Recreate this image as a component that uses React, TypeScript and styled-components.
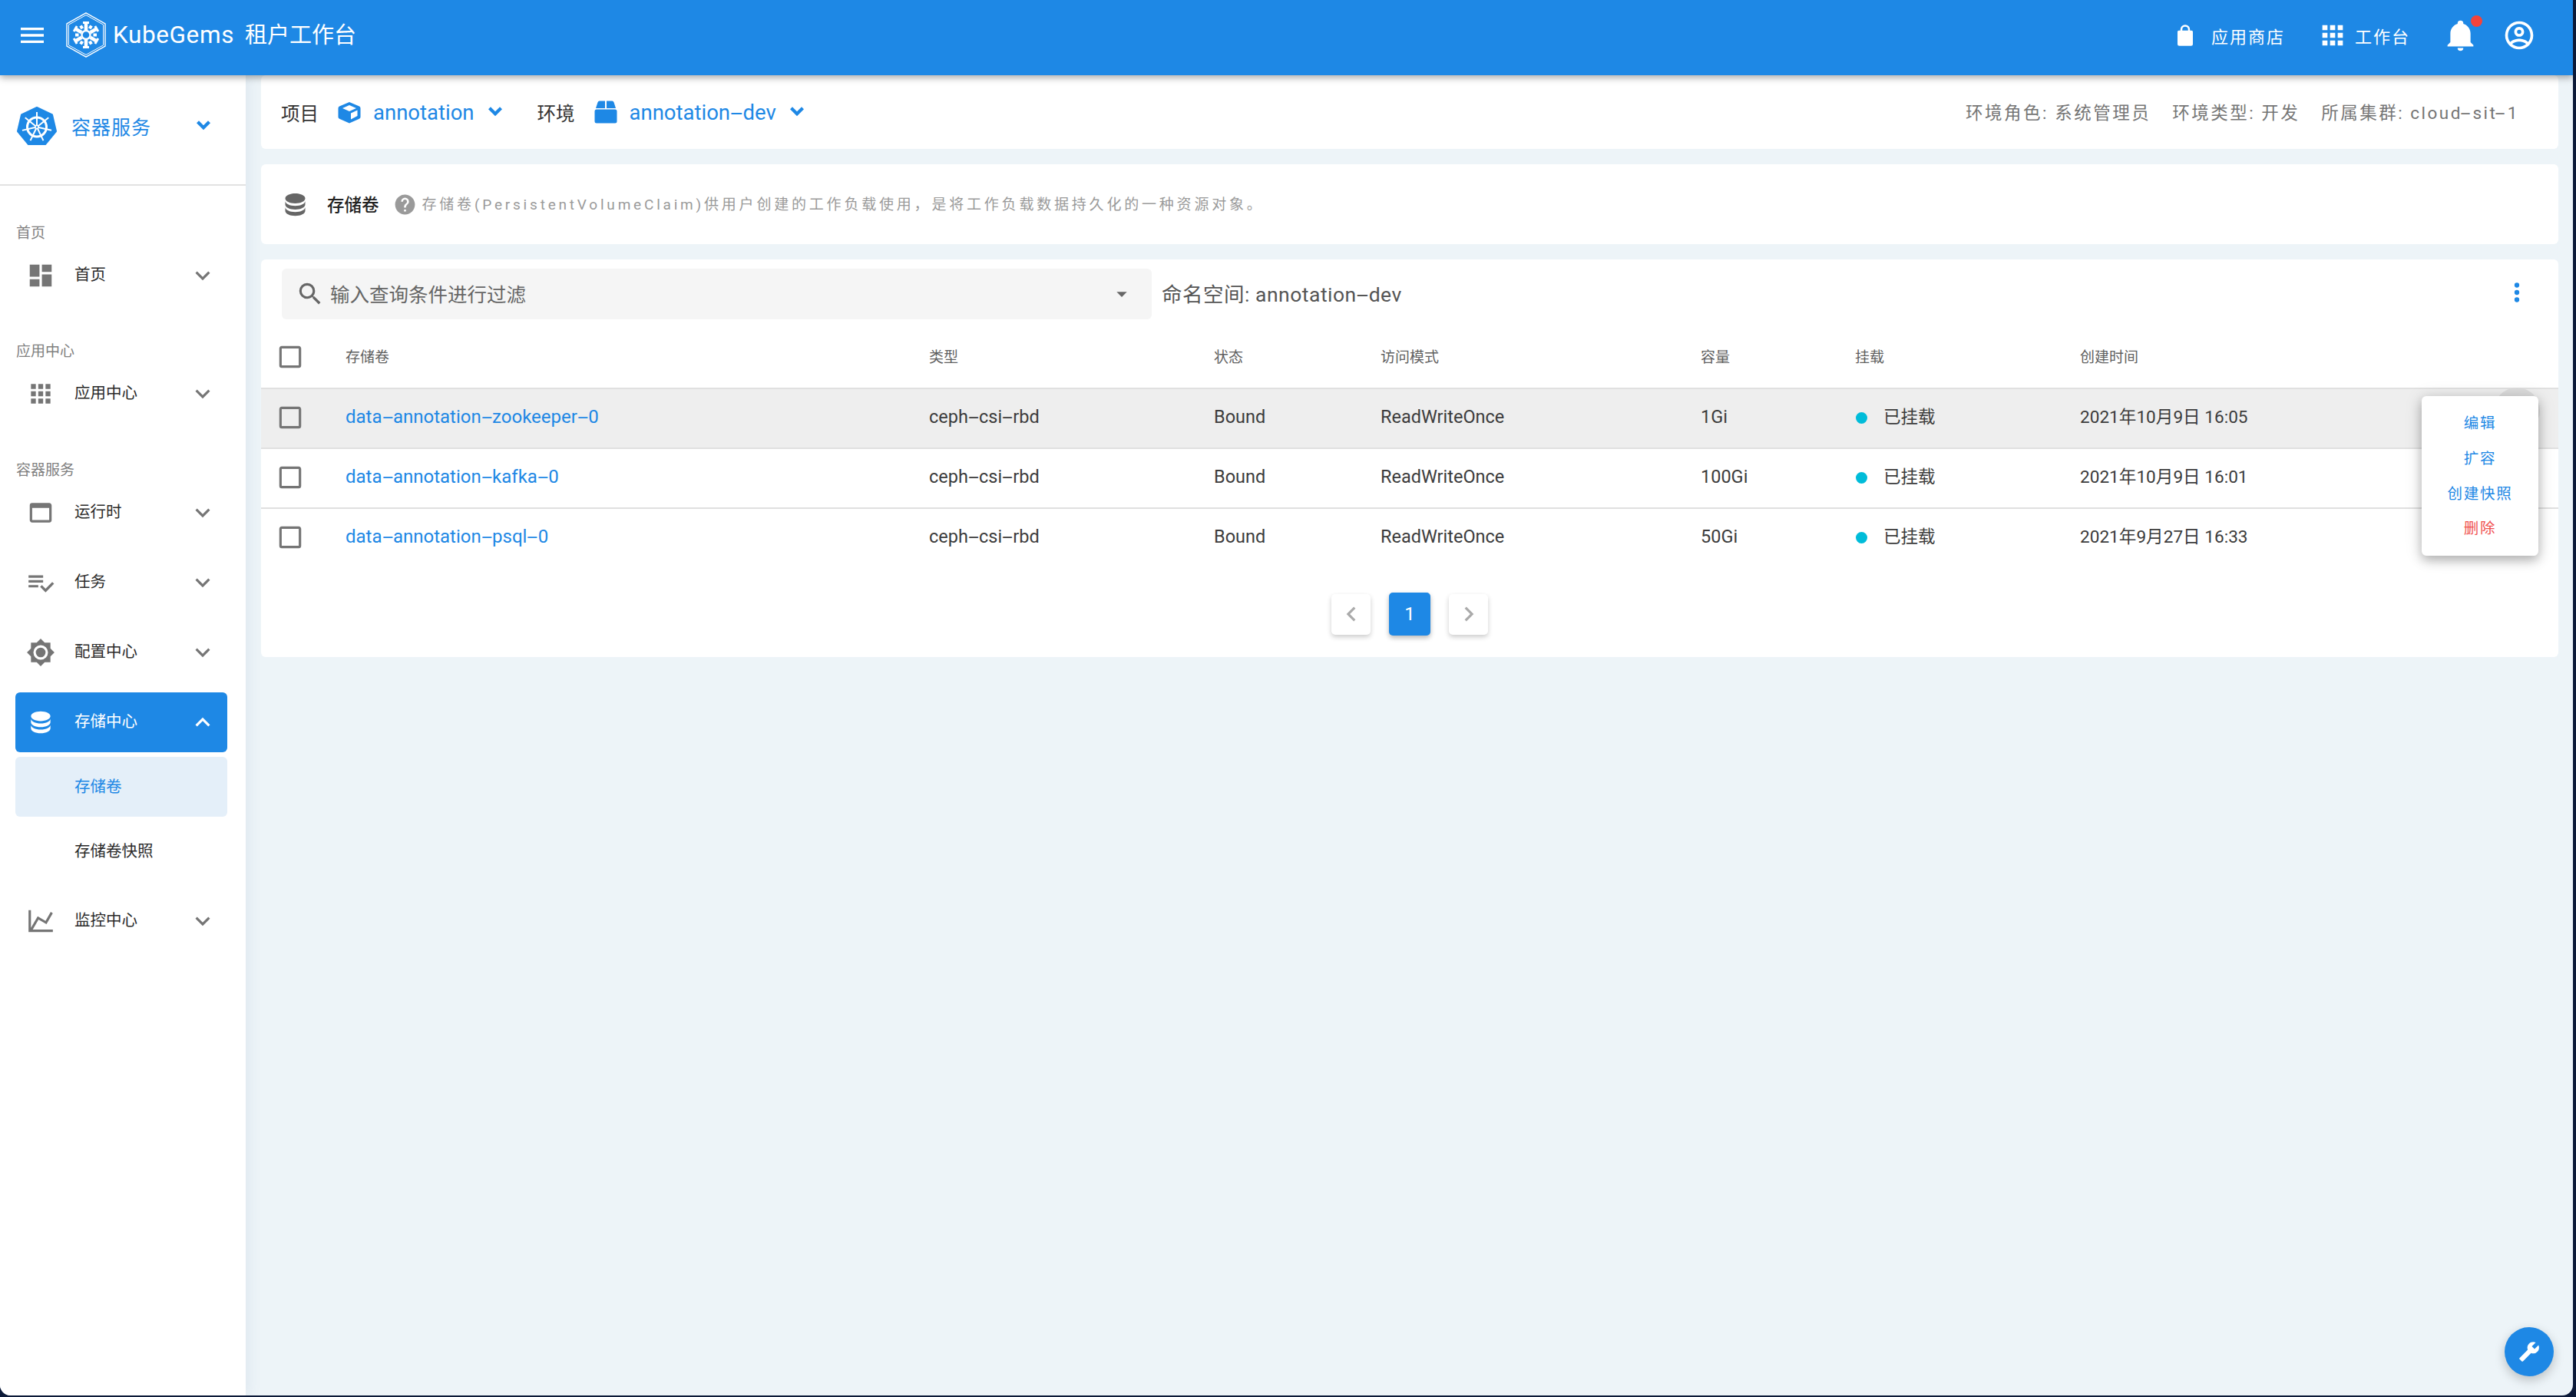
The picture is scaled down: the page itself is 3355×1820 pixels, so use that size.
import React from 'react';
import styled, { createGlobalStyle } from 'styled-components';

const BLUE = '#1e88e5';
const FONT = 'Roboto, "Noto Sans CJK SC", sans-serif';

const P = {
  menu: 'M3,6H21V8H3V6M3,11H21V13H3V11M3,16H21V18H3V16Z',
  down: 'M7.41,8.58L12,13.17L16.59,8.58L18,10L12,16L6,10L7.41,8.58Z',
  downBold: 'M6,9.5L8,7.5L12,11.5L16,7.5L18,9.5L12,15.5Z',
  up: 'M7.41,15.41L12,10.83L16.59,15.41L18,14L12,8L6,14L7.41,15.41Z',
  left: 'M15.41,16.58L10.83,12L15.41,7.41L14,6L8,12L14,18L15.41,16.58Z',
  right: 'M8.59,16.58L13.17,12L8.59,7.41L10,6L16,12L10,18L8.59,16.58Z',
  dashboard: 'M13,3V9H21V3M13,21H21V11H13M3,21H11V15H3M3,13H11V3H3V13Z',
  apps: 'M16,20H20V16H16M16,14H20V10H16M10,8H14V4H10M16,8H20V4H16M10,14H14V10H10M4,14H8V10H4M4,20H8V16H4M10,20H14V16H10M4,8H8V4H4V8Z',
  application:
    'M19,4C20.11,4 21,4.9 21,6V18A2,2 0 0,1 19,20H5C3.89,20 3,19.1 3,18V6A2,2 0 0,1 5,4H19M19,18V8H5V18H19Z',
  playlist: 'M14,10H2V12H14V10M14,6H2V8H14V6M2,16H10V14H2V16M21.5,11.5L23,13L16,20L11.5,15.5L13,14L16,17L21.5,11.5Z',
  brightness:
    'M12,8A4,4 0 0,0 8,12A4,4 0 0,0 12,16A4,4 0 0,0 16,12A4,4 0 0,0 12,8M12,18A6,6 0 0,1 6,12A6,6 0 0,1 12,6A6,6 0 0,1 18,12A6,6 0 0,1 12,18M20,8.69V4H15.31L12,0.69L8.69,4H4V8.69L0.69,12L4,15.31V20H8.69L12,23.31L15.31,20H20V15.31L23.31,12L20,8.69Z',
  database:
    'M12,3C7.58,3 4,4.79 4,7C4,9.21 7.58,11 12,11C16.42,11 20,9.21 20,7C20,4.79 16.42,3 12,3M4,9V12C4,14.21 7.58,16 12,16C16.42,16 20,14.21 20,12V9C20,11.21 16.42,13 12,13C7.58,13 4,11.21 4,9M4,14V17C4,19.21 7.58,21 12,21C16.42,21 20,19.21 20,17V14C20,16.21 16.42,18 12,18C7.58,18 4,16.21 4,14Z',
  chart: 'M16,11.78L20.24,4.45L21.97,5.45L16.74,14.5L10.23,10.75L5.46,19H22V21H2V3H4V17.54L9.5,8L16,11.78Z',
  bag: 'M12,1A5,5 0 0,0 7,6V7H5.5C4.6,7 4,7.6 4,8.5V21A2,2 0 0,0 6,23H18A2,2 0 0,0 20,21V8.5C20,7.6 19.4,7 18.5,7H17V6A5,5 0 0,0 12,1M12,3A3,3 0 0,1 15,6V7H9V6A3,3 0 0,1 12,3Z',
  bell: 'M21,19V20H3V19L5,17V11C5,7.9 7.03,5.17 10,4.29C10,4.19 10,4.1 10,4A2,2 0 0,1 12,2A2,2 0 0,1 14,4C14,4.1 14,4.19 14,4.29C16.97,5.17 19,7.9 19,11V17L21,19M14,21A2,2 0 0,1 12,23A2,2 0 0,1 10,21',
  account:
    'M12,2A10,10 0 0,0 2,12A10,10 0 0,0 12,22A10,10 0 0,0 22,12A10,10 0 0,0 12,2M7.07,18.28C7.5,17.38 10.12,16.5 12,16.5C13.88,16.5 16.5,17.38 16.93,18.28C15.57,19.36 13.86,20 12,20C10.14,20 8.43,19.36 7.07,18.28M18.36,16.83C16.93,15.09 13.46,14.5 12,14.5C10.54,14.5 7.07,15.09 5.64,16.83C4.62,15.5 4,13.82 4,12C4,7.59 7.59,4 12,4C16.41,4 20,7.59 20,12C20,13.82 19.38,15.5 18.36,16.83M12,6C10.06,6 8.5,7.56 8.5,9.5C8.5,11.44 10.06,13 12,13C13.94,13 15.5,11.44 15.5,9.5C15.5,7.56 13.94,6 12,6M12,11A1.5,1.5 0 0,1 10.5,9.5A1.5,1.5 0 0,1 12,8A1.5,1.5 0 0,1 13.5,9.5A1.5,1.5 0 0,1 12,11Z',
  help: 'M15.07,11.25L14.17,12.17C13.45,12.89 13,13.5 13,15H11V14.5C11,13.39 11.45,12.39 12.17,11.67L13.41,10.41C13.78,10.05 14,9.55 14,9C14,7.89 13.1,7 12,7A2,2 0 0,0 10,9H8A4,4 0 0,1 12,5A4,4 0 0,1 16,9C16,9.88 15.64,10.67 15.07,11.25M13,19H11V17H13M12,2A10,10 0 0,0 2,12C2,17.53 6.47,22 12,22C17.53,22 22,17.53 22,12C22,6.47 17.5,2 12,2Z',
  search:
    'M9.5,3A6.5,6.5 0 0,1 16,9.5C16,11.11 15.41,12.59 14.44,13.73L14.71,14H15.5L20.5,19L19,20.5L14,15.5V14.71L13.73,14.44C12.59,15.41 11.11,16 9.5,16A6.5,6.5 0 0,1 3,9.5A6.5,6.5 0 0,1 9.5,3M9.5,5C7,5 5,7 5,9.5C5,12 7,14 9.5,14C12,14 14,12 14,9.5C14,7 12,5 9.5,5Z',
  caret: 'M7,10L12,15L17,10H7Z',
  dots: 'M12,16A2,2 0 0,1 14,18A2,2 0 0,1 12,20A2,2 0 0,1 10,18A2,2 0 0,1 12,16M12,10A2,2 0 0,1 14,12A2,2 0 0,1 12,14A2,2 0 0,1 10,12A2,2 0 0,1 12,10M12,4A2,2 0 0,1 14,6A2,2 0 0,1 12,8A2,2 0 0,1 10,6A2,2 0 0,1 12,4Z',
  checkbox:
    'M19,3H5C3.89,3 3,3.89 3,5V19A2,2 0 0,0 5,21H19A2,2 0 0,0 21,19V5C21,3.89 20.1,3 19,3M19,5V19H5V5H19Z',
  wrench:
    'M22.7,19L13.6,9.9C14.5,7.6 14,4.9 12.1,3C10.1,1 7.1,0.6 4.7,1.7L9,6L6,9L1.6,4.7C0.4,7.1 0.9,10.1 2.9,12.1C4.8,14 7.5,14.5 9.8,13.6L18.9,22.7C19.3,23.1 19.9,23.1 20.3,22.7L22.6,20.4C23.1,20 23.1,19.3 22.7,19Z',
};

const GlobalStyle = createGlobalStyle`
  html, body {
    margin: 0;
    padding: 0;
    background: #0c1a38;
  }
  * {
    box-sizing: border-box;
  }
`;

const Svg = styled.svg<{ $size: number; $color: string; $flip?: boolean }>`
  width: ${(p) => p.$size}px;
  height: ${(p) => p.$size}px;
  flex: none;
  fill: ${(p) => p.$color};
  display: block;
  ${(p) => (p.$flip ? 'transform: scaleX(-1);' : '')}
`;

const Icon = ({ d, size, color, flip }: { d: string; size: number; color: string; flip?: boolean }) => (
  <Svg viewBox="0 0 24 24" $size={size} $color={color} $flip={flip}>
    <path d={d} fillRule="evenodd" />
  </Svg>
);

// the hyphen in the reference font is about twice as wide as Roboto's
const Hyphen = styled.span`
  display: inline-block;
  width: 0.6em;
  text-align: center;
  transform: scaleX(2.1);
`;

const Dashed = ({ text }: { text: string }) => (
  <>
    {text.split('-').map((part, i) => (
      <React.Fragment key={i}>
        {i > 0 && <Hyphen>-</Hyphen>}
        {part}
      </React.Fragment>
    ))}
  </>
);

const Window = styled.div`
  width: 3351px;
  height: 1818px;
  background: #edf4f8;
  border-radius: 0 0 14px 14px;
  overflow: hidden;
  position: relative;
  display: flex;
  flex-direction: column;
  font-family: ${FONT};
`;

const TopBar = styled.header`
  height: 98px;
  flex: none;
  background: ${BLUE};
  box-shadow: 0 3px 9px rgba(0, 0, 0, 0.35);
  position: relative;
  z-index: 3;
  display: flex;
  align-items: center;
  padding: 0 48px 7px 22px;
  color: #fff;
`;

const LogoWrap = styled.div`
  margin-left: 24px;
  margin-right: 9px;
  display: flex;
`;

const BrandName = styled.div`
  white-space: nowrap;
  display: flex;
  align-items: center;
  gap: 14px;
  line-height: 40px;
`;

const BrandLatin = styled.span`
  font-size: 31.5px;
  letter-spacing: 0.6px;
`;

const BrandCjk = styled.span`
  font-size: 29px;
`;

const TopActions = styled.div`
  margin-left: auto;
  display: flex;
  align-items: center;
`;

const TopLink = styled.div<{ $left: number; $gap: number }>`
  display: flex;
  align-items: center;
  gap: ${(p) => p.$gap}px;
  font-size: 22px;
  letter-spacing: 2px;
  margin-left: ${(p) => p.$left}px;
`;

const BellWrap = styled.div`
  position: relative;
  margin-left: 43px;
`;

const RedDot = styled.span`
  position: absolute;
  top: -3px;
  right: -6px;
  width: 15px;
  height: 15px;
  border-radius: 50%;
  background: #f4433b;
`;

const AvatarWrap = styled.div`
  margin-left: 32px;
`;

const Body = styled.div`
  flex: 1;
  display: flex;
  min-height: 0;
`;

const Sidebar = styled.aside`
  width: 320px;
  flex: none;
  background: #fff;
  box-shadow: 4px 0 16px rgba(60, 90, 140, 0.08);
  position: relative;
  z-index: 2;
`;

const ServiceHead = styled.div`
  height: 144px;
  border-bottom: 2px solid #e2e2e2;
  display: flex;
  align-items: center;
  padding: 0 37px 10px 22px;
  color: ${BLUE};
  font-size: 25px;
  letter-spacing: 1px;
  gap: 19px;
`;

const ServiceChevron = styled.div`
  margin-left: auto;
`;

const Nav = styled.nav`
  padding: 46px 24px 0 20px;
  display: flex;
  flex-direction: column;
`;

const NavSection = styled.div`
  display: flex;
  flex-direction: column;
  gap: 13px;
  & + & {
    margin-top: 44px;
  }
  &:last-child {
    margin-top: 45px;
  }
`;

const SectionLabel = styled.div`
  height: 32px;
  margin-bottom: -13px;
  font-size: 19px;
  line-height: 32px;
  color: #808080;
  padding-left: 1px;
`;

const NavItem = styled.div<{ $active?: boolean }>`
  height: 78px;
  display: flex;
  align-items: center;
  padding: 0 13.5px;
  gap: 25.5px;
  border-radius: 6px;
  font-size: 20.5px;
  color: ${(p) => (p.$active ? '#fff' : '#2b2b2b')};
  background: ${(p) => (p.$active ? BLUE : 'transparent')};
`;

const NavText = styled.span`
  flex: 1;
  position: relative;
  top: -3px;
`;

const NavGroup = styled.div`
  display: flex;
  flex-direction: column;
  gap: 6px;
`;

const SubItem = styled.div<{ $active?: boolean }>`
  height: 78px;
  display: flex;
  align-items: center;
  padding: 0 0 4px 77px;
  border-radius: 6px;
  font-size: 20.5px;
  color: ${(p) => (p.$active ? BLUE : '#2b2b2b')};
  background: ${(p) => (p.$active ? '#e4eff9' : 'transparent')};
`;

const Main = styled.main`
  flex: 1;
  min-width: 0;
  padding: 0 19px 0 20px;
  display: flex;
  flex-direction: column;
  gap: 20px;
`;

const Card = styled.section`
  background: #fff;
  border-radius: 6px;
`;

const ScopeCard = styled(Card)`
  height: 96px;
  display: flex;
  align-items: center;
  padding: 0 51px 0 26px;
  color: #333;
  font-size: 24.5px;
`;

const ScopeLabel = styled.span<{ $left?: number }>`
  margin-left: ${(p) => p.$left ?? 0}px;
  margin-right: 25px;
`;

const ScopeValue = styled.span`
  color: ${BLUE};
  font-size: 27.5px;
  margin-left: 16px;
  margin-right: 9px;
`;

const ScopeInfo = styled.div`
  margin-left: auto;
  display: flex;
  gap: 28px;
  color: #757575;
  font-size: 22.5px;
  letter-spacing: 2.5px;
  padding-bottom: 2px;
`;

const TitleCard = styled(Card)`
  height: 104px;
  display: flex;
  align-items: center;
  padding-left: 25px;
`;

const PageTitle = styled.span`
  font-size: 22.5px;
  font-weight: 500;
  color: #222;
  margin-left: 22px;
  margin-right: 18px;
  padding-bottom: 3px;
`;

const PageDesc = styled.span`
  font-size: 19px;
  color: #9a9a9a;
  letter-spacing: 3.8px;
  margin-left: 7px;
  padding-bottom: 3px;
`;

const ListCard = styled(Card)`
  position: relative;
  padding-top: 12px;
  height: 518px;
`;

const FilterRow = styled.div`
  display: flex;
  align-items: center;
  padding: 0 35px 0 27px;
  height: 66px;
`;

const SearchBox = styled.div`
  width: 1133px;
  height: 66px;
  background: #f5f5f5;
  border-radius: 6px;
  display: flex;
  align-items: center;
  padding: 0 23px 0 18px;
  gap: 7px;
  color: #666;
  font-size: 25.5px;
`;

const SearchText = styled.span`
  flex: 1;
  padding-bottom: 3px;
`;

const Namespace = styled.span`
  margin-left: 13px;
  font-size: 26.5px;
  letter-spacing: 0.5px;
  color: #555;
  flex: 1;
  padding-bottom: 3px;
`;

const MoreButton = styled.div`
  margin-bottom: 4px;
`;

const TableGrid = styled.div`
  display: flex;
  flex-direction: column;
`;

const COLUMNS = '110px 760px 371px 217px 417px 201px 293px 1fr';

const HeadRow = styled.div`
  display: grid;
  grid-template-columns: ${COLUMNS};
  align-items: center;
  height: 89px;
  padding-top: 10px;
  color: #5f5f5f;
  font-size: 19px;
`;

const HeadCell = styled.div`
  position: relative;
  top: -2px;
`;

const DataRow = styled.div<{ $hover?: boolean }>`
  display: grid;
  grid-template-columns: ${COLUMNS};
  align-items: center;
  height: 78px;
  border-top: 2px solid #e0e0e0;
  background: ${(p) => (p.$hover ? '#eeeeee' : 'transparent')};
  color: #3c3c3c;
  font-size: 23.5px;
`;

const CheckCell = styled.div`
  padding-left: 19px;
  position: relative;
  top: -1px;
`;

const Cell = styled.div`
  white-space: nowrap;
  position: relative;
  top: -2px;
`;

const NameLink = styled(Cell)`
  color: ${BLUE};
  font-size: 24px;
`;

const MountCell = styled(Cell)`
  display: flex;
  align-items: center;
  gap: 21px;
  font-size: 22.5px;
  padding-left: 1px;
  top: -4px;
`;

const Dot = styled.span`
  width: 15px;
  height: 15px;
  border-radius: 50%;
  background: #00bcd9;
  position: relative;
  top: 3px;
`;

const DateCell = styled(Cell)`
  font-size: 22.6px;
  top: -4px;
  display: flex;
  align-items: center;
  justify-content: space-between;
`;

const HoverCircle = styled.span`
  width: 60px;
  height: 60px;
  border-radius: 50%;
  background: #dcdcdc;
  position: absolute;
  right: 24px;
  top: -20px;
`;

const Pager = styled.div`
  display: flex;
  justify-content: center;
  align-items: center;
  gap: 24px;
  margin-top: 33px;
`;

const PageBtn = styled.div<{ $active?: boolean }>`
  width: ${(p) => (p.$active ? 54 : 51)}px;
  height: ${(p) => (p.$active ? 56 : 53)}px;
  border-radius: 5px;
  display: flex;
  align-items: center;
  justify-content: center;
  font-size: 24px;
  color: #fff;
  background: ${(p) => (p.$active ? BLUE : '#fff')};
  box-shadow: 0 3px 6px rgba(0, 0, 0, ${(p) => (p.$active ? 0.28 : 0.2)});
`;

const RowMenu = styled.div`
  position: absolute;
  top: 178px;
  left: 2814px;
  width: 152px;
  height: 208px;
  padding: 12px 0;
  background: #fff;
  border-radius: 6px;
  box-shadow: 0 6px 14px rgba(0, 0, 0, 0.25), 0 2px 24px rgba(0, 0, 0, 0.12);
  z-index: 2;
`;

const MenuItem = styled.div<{ $danger?: boolean }>`
  height: 46px;
  padding-bottom: ${(p) => (p.$danger ? 6 : 3)}px;
  display: flex;
  align-items: center;
  justify-content: center;
  font-size: 19.5px;
  letter-spacing: 1.8px;
  color: ${(p) => (p.$danger ? '#f0524f' : BLUE)};
`;

const Fab = styled.div`
  position: absolute;
  left: 3262px;
  top: 1729px;
  width: 64px;
  height: 64px;
  border-radius: 50%;
  background: ${BLUE};
  display: flex;
  align-items: center;
  justify-content: center;
  box-shadow: 0 5px 14px rgba(0, 0, 0, 0.22);
  z-index: 4;
`;

const KubeGemsLogo = () => (
  <svg width="52" height="59" viewBox="0 0 52 59">
    <polygon points="26,0.8 51,14.8 51,44.2 26,58.2 1,44.2 1,14.8" fill="none" stroke="#fff" strokeWidth="1.4" />
    <polygon points="26,3.6 48.6,16.2 48.6,42.8 26,55.4 3.4,42.8 3.4,16.2" fill="none" stroke="#fff" strokeWidth="1" />
    {[0, 60, 120, 180, 240, 300].map((a) => (
      <g key={a} transform={`rotate(${a} 26 29.5)`} stroke="#fff" fill="none">
        <line x1="26" y1="23" x2="26" y2="13" strokeWidth="4.5" />
        <line x1="22" y1="13.5" x2="30" y2="13.5" strokeWidth="3" />
      </g>
    ))}
    {[30, 90, 150, 210, 270, 330].map((a) => (
      <line key={a} transform={`rotate(${a} 26 29.5)`} x1="26" y1="20" x2="26" y2="15.5" stroke="#fff" strokeWidth="4" />
    ))}
    <circle cx="26" cy="29.5" r="5.5" fill="none" stroke="#fff" strokeWidth="2.4" />
  </svg>
);

const KubeLogo = () => (
  <svg width="52" height="50" viewBox="0 0 52 50">
    <polygon
      points="26,1 46,10.5 51,32 37,49 15,49 1,32 6,10.5"
      fill={BLUE}
      stroke={BLUE}
      strokeWidth="2"
      strokeLinejoin="round"
    />
    <circle cx="26" cy="26.5" r="12.5" fill="none" stroke="#fff" strokeWidth="3" />
    {[0, 51.4, 102.8, 154.3, 205.7, 257.1, 308.6].map((a) => (
      <line
        key={a}
        transform={`rotate(${a} 26 26.5)`}
        x1="26"
        y1="24"
        x2="26"
        y2="7"
        stroke="#fff"
        strokeWidth="2"
      />
    ))}
    <circle cx="26" cy="26.5" r="3" fill="#fff" />
    <circle cx="26" cy="26.5" r="1.2" fill={BLUE} />
  </svg>
);

const CubeIcon = () => (
  <svg width="30" height="29" viewBox="0 0 30 29">
    <path
      d="M15 1 L28 6.5 Q29.5 7 29.5 9 V20.5 Q29.5 22 28 22.8 L15 28.5 L2 22.8 Q0.5 22 0.5 20.5 V9 Q0.5 7 2 6.5 Z"
      fill={BLUE}
    />
    <path d="M15 5 L24 9 L15 13 L6 9 Z" fill="#fff" />
    <path d="M17 15.5 L25.5 11.5 V19 L17 23.5 Z" fill="#fff" />
  </svg>
);

const BoxIcon = () => (
  <svg width="30" height="30" viewBox="0 0 30 30">
    <path d="M2 10 L4.5 2.2 Q5 0.6 6.8 0.6 H14 V10 Z" fill={BLUE} />
    <path d="M16 0.6 H23.2 Q25 0.6 25.5 2.2 L28 10 H16 Z" fill={BLUE} />
    <rect x="0.5" y="11.5" width="29" height="18" rx="2.5" fill={BLUE} />
  </svg>
);

const NAV_GREY = '#757575';

const rows = [
  { name: 'data-annotation-zookeeper-0', size: '1Gi', time: '2021年10月9日 16:05', hover: true },
  { name: 'data-annotation-kafka-0', size: '100Gi', time: '2021年10月9日 16:01' },
  { name: 'data-annotation-psql-0', size: '50Gi', time: '2021年9月27日 16:33' },
];

const NavEntry = ({ icon, label }: { icon: string; label: string }) => (
  <NavItem>
    <Icon d={icon} size={38} color={NAV_GREY} />
    <NavText>{label}</NavText>
    <Icon d={P.down} size={38} color={NAV_GREY} />
  </NavItem>
);

const App = () => {
  return (
    <Window>
      <GlobalStyle />
      <TopBar>
        <Icon d={P.menu} size={40} color="#fff" />
        <LogoWrap>
          <KubeGemsLogo />
        </LogoWrap>
        <BrandName>
          <BrandLatin>KubeGems</BrandLatin>
          <BrandCjk>租户工作台</BrandCjk>
        </BrandName>
        <TopActions>
          <TopLink $left={0} $gap={19}>
            <Icon d={P.bag} size={30} color="#fff" />
            应用商店
          </TopLink>
          <TopLink $left={42} $gap={9}>
            <Icon d={P.apps} size={40} color="#fff" />
            工作台
          </TopLink>
          <BellWrap>
            <Icon d={P.bell} size={45} color="#fff" />
            <RedDot />
          </BellWrap>
          <AvatarWrap>
            <Icon d={P.account} size={44} color="#fff" />
          </AvatarWrap>
        </TopActions>
      </TopBar>
      <Body>
        <Sidebar>
          <ServiceHead>
            <KubeLogo />
            容器服务
            <ServiceChevron>
              <Icon d={P.downBold} size={36} color={BLUE} />
            </ServiceChevron>
          </ServiceHead>
          <Nav>
            <NavSection>
              <SectionLabel>首页</SectionLabel>
              <NavEntry icon={P.dashboard} label="首页" />
            </NavSection>
            <NavSection>
              <SectionLabel>应用中心</SectionLabel>
              <NavEntry icon={P.apps} label="应用中心" />
            </NavSection>
            <NavSection>
              <SectionLabel>容器服务</SectionLabel>
              <NavEntry icon={P.application} label="运行时" />
              <NavEntry icon={P.playlist} label="任务" />
              <NavEntry icon={P.brightness} label="配置中心" />
              <NavGroup>
                <NavItem $active>
                  <Icon d={P.database} size={38} color="#fff" />
                  <NavText>存储中心</NavText>
                  <Icon d={P.up} size={38} color="#fff" />
                </NavItem>
                <SubItem $active>存储卷</SubItem>
                <SubItem>存储卷快照</SubItem>
              </NavGroup>
              <NavEntry icon={P.chart} label="监控中心" />
            </NavSection>
          </Nav>
        </Sidebar>
        <Main>
          <ScopeCard>
            <ScopeLabel>项目</ScopeLabel>
            <CubeIcon />
            <ScopeValue>annotation</ScopeValue>
            <Icon d={P.downBold} size={36} color={BLUE} />
            <ScopeLabel $left={37}>环境</ScopeLabel>
            <BoxIcon />
            <ScopeValue>
              <Dashed text="annotation-dev" />
            </ScopeValue>
            <Icon d={P.downBold} size={36} color={BLUE} />
            <ScopeInfo>
              <span>环境角色: 系统管理员</span>
              <span>环境类型: 开发</span>
              <span>
                所属集群: <Dashed text="cloud-sit-1" />
              </span>
            </ScopeInfo>
          </ScopeCard>
          <TitleCard>
            <Icon d={P.database} size={39} color="#666" />
            <PageTitle>存储卷</PageTitle>
            <Icon d={P.help} size={31} color="#9a9a9a" />
            <PageDesc>存储卷(PersistentVolumeClaim)供用户创建的工作负载使用，是将工作负载数据持久化的一种资源对象。</PageDesc>
          </TitleCard>
          <ListCard>
            <FilterRow>
              <SearchBox>
                <Icon d={P.search} size={38} color="#666" />
                <SearchText>输入查询条件进行过滤</SearchText>
                <Icon d={P.caret} size={32} color="#666" />
              </SearchBox>
              <Namespace>
                命名空间: <Dashed text="annotation-dev" />
              </Namespace>
              <MoreButton>
                <Icon d={P.dots} size={38} color={BLUE} />
              </MoreButton>
            </FilterRow>
            <TableGrid>
              <HeadRow>
                <CheckCell>
                  <Icon d={P.checkbox} size={38} color={NAV_GREY} />
                </CheckCell>
                <HeadCell>存储卷</HeadCell>
                <HeadCell>类型</HeadCell>
                <HeadCell>状态</HeadCell>
                <HeadCell>访问模式</HeadCell>
                <HeadCell>容量</HeadCell>
                <HeadCell>挂载</HeadCell>
                <HeadCell>创建时间</HeadCell>
              </HeadRow>
              {rows.map((row) => (
                <DataRow key={row.name} $hover={row.hover}>
                  <CheckCell>
                    <Icon d={P.checkbox} size={38} color={NAV_GREY} />
                  </CheckCell>
                  <NameLink>
                    <Dashed text={row.name} />
                  </NameLink>
                  <Cell>
                    <Dashed text="ceph-csi-rbd" />
                  </Cell>
                  <Cell>Bound</Cell>
                  <Cell>ReadWriteOnce</Cell>
                  <Cell>{row.size}</Cell>
                  <MountCell>
                    <Dot />
                    已挂载
                  </MountCell>
                  <DateCell>
                    {row.time}
                    {row.hover && <HoverCircle />}
                  </DateCell>
                </DataRow>
              ))}
            </TableGrid>
            <Pager>
              <PageBtn>
                <Icon d={P.left} size={38} color="#aaa" />
              </PageBtn>
              <PageBtn $active>1</PageBtn>
              <PageBtn>
                <Icon d={P.right} size={38} color="#aaa" />
              </PageBtn>
            </Pager>
            <RowMenu>
              <MenuItem>编辑</MenuItem>
              <MenuItem>扩容</MenuItem>
              <MenuItem>创建快照</MenuItem>
              <MenuItem $danger>删除</MenuItem>
            </RowMenu>
          </ListCard>
        </Main>
      </Body>
      <Fab>
        <Icon d={P.wrench} size={28} color="#fff" flip />
      </Fab>
    </Window>
  );
};

export default App;
